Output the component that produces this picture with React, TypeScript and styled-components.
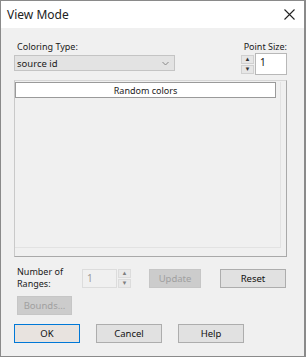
import React from "react";
import styled, { createGlobalStyle } from "styled-components";

const GlobalStyle = createGlobalStyle`
  html, body {
    margin: 0;
    padding: 0;
    background: #ffffff;
  }
  * {
    box-sizing: border-box;
  }
`;

const font = `"Segoe UI", "Noto Sans", "Liberation Sans", sans-serif`;

const Window = styled.div`
  width: 306px;
  height: 357px;
  display: flex;
  flex-direction: column;
  border: 1px solid #8a8a8a;
  border-right-width: 2px;
  background: #f0f0f0;
  font-family: ${font};
  font-size: 9px;
  color: #1a1a1a;
  overflow: hidden;
`;

const TitleBar = styled.div`
  height: 27px;
  flex: none;
  display: flex;
  align-items: center;
  justify-content: space-between;
  background: #ffffff;
  padding: 0 9px 0 6px;
  font-size: 12px;
  color: #222;
`;

const Close = styled.svg`
  width: 11px;
  height: 11px;
`;

const Body = styled.div`
  flex: 1;
  display: flex;
  flex-direction: column;
  padding: 13px 17px 0 13px;
`;

const TopRow = styled.div`
  display: flex;
  justify-content: space-between;
  align-items: flex-start;
`;

const Field = styled.div<{ align?: string }>`
  display: flex;
  flex-direction: column;
  align-items: ${(p) => p.align || "flex-start"};
`;

const Label = styled.div<{ indent?: number }>`
  line-height: 12px;
  padding-left: ${(p) => p.indent ?? 3}px;
  white-space: nowrap;
`;

const Combo = styled.div`
  margin-top: 2px;
  width: 161px;
  height: 16px;
  border: 1px solid #c4c4c4;
  background: #e3e3e3;
  display: flex;
  align-items: center;
  justify-content: space-between;
  padding: 0 5px 0 2px;
  font-size: 9.5px;
`;

const Chevron = styled.svg`
  width: 7px;
  height: 5px;
`;

const SpinGroup = styled.div`
  display: flex;
  align-items: center;
  gap: 1px;
`;

const Arrows = styled.div<{ disabled?: boolean }>`
  display: flex;
  flex-direction: column;
  gap: 1px;
  opacity: ${(p) => (p.disabled ? 0.6 : 1)};
`;

const ArrowBtn = styled.div`
  width: 13px;
  height: 9px;
  background: #e6e6e6;
  border: 1px solid #d0d0d0;
  display: flex;
  align-items: center;
  justify-content: center;
  font-size: 6px;
  line-height: 1;
  color: #333;
`;

const EditBox = styled.div<{ w: number; h: number; disabled?: boolean }>`
  width: ${(p) => p.w}px;
  height: ${(p) => p.h}px;
  background: ${(p) => (p.disabled ? "#f0f0f0" : "#ffffff")};
  border: 1px solid ${(p) => (p.disabled ? "#dcdcdc" : "#b8b8b8")};
  color: ${(p) => (p.disabled ? "#9a9a9a" : "#111")};
  padding: 1px 0 0 4px;
  font-size: 10px;
  line-height: 14px;
`;

const Panel = styled.div`
  margin-top: 5px;
  height: 177px;
  border: 1px solid #a9a9a9;
  border-top-color: #d6d6d6;
  border-left-color: #c9c9c9;
  background: #f0f0f0;
  padding: 1px 5px 0 0;
`;

const Inner = styled.div`
  height: 166px;
  border-right: 1px solid #e2e2e2;
  border-bottom: 1px solid #e2e2e2;
  display: flex;
  flex-direction: column;
`;

const HeaderBar = styled.div`
  height: 16px;
  margin-right: 4px;
  background: #ffffff;
  border: 1px solid #9a9a9a;
  display: flex;
  align-items: center;
  justify-content: center;
  font-size: 9px;
`;

const RangeRow = styled.div`
  margin-top: 9px;
  display: flex;
  align-items: center;
`;

const RangeLabel = styled.div`
  width: 68px;
  padding-left: 3px;
  line-height: 12px;
`;

const Spacer = styled.div<{ w: number }>`
  width: ${(p) => p.w}px;
  flex: none;
`;

const Button = styled.div<{ w: number; disabled?: boolean; primary?: boolean }>`
  width: ${(p) => p.w}px;
  height: 19px;
  display: flex;
  align-items: center;
  justify-content: center;
  background: ${(p) => (p.disabled ? "#cccccc" : p.primary ? "#e8e3df" : "#e1e1e1")};
  border: 1px solid
    ${(p) => (p.disabled ? "#c6c6c6" : p.primary ? "#0078d7" : "#adadad")};
  color: ${(p) => (p.disabled ? "#a0a0a0" : "#111")};
  font-size: 9.5px;
`;

const BoundsRow = styled.div`
  margin-top: 6px;
  padding-left: 3px;
  display: flex;
`;

const FooterRow = styled.div`
  margin-top: 9px;
  display: flex;
  gap: 16px;
`;

export default function App() {
  return (
    <>
      <GlobalStyle />
      <Window>
        <TitleBar>
          <span>View Mode</span>
          <Close viewBox="0 0 11 11">
            <path d="M0.5 0.5 L10.5 10.5 M10.5 0.5 L0.5 10.5" stroke="#222" strokeWidth="1.1" />
          </Close>
        </TitleBar>
        <Body>
          <TopRow>
            <Field>
              <Label>Coloring Type:</Label>
              <Combo>
                <span>source id</span>
                <Chevron viewBox="0 0 7 5">
                  <path d="M0.5 1 L3.5 4 L6.5 1" fill="none" stroke="#888" strokeWidth="1" />
                </Chevron>
              </Combo>
            </Field>
            <Field align="flex-end">
              <Label indent={0}>Point Size:</Label>
              <SpinGroup>
                <Arrows>
                  <ArrowBtn>▲</ArrowBtn>
                  <ArrowBtn>▼</ArrowBtn>
                </Arrows>
                <EditBox w={32} h={22}>1</EditBox>
              </SpinGroup>
            </Field>
          </TopRow>
          <Panel>
            <Inner>
              <HeaderBar>Random colors</HeaderBar>
            </Inner>
          </Panel>
          <RangeRow>
            <RangeLabel>
              Number of
              <br />
              Ranges:
            </RangeLabel>
            <SpinGroup>
              <EditBox w={35} h={19} disabled>
                1
              </EditBox>
              <Arrows disabled>
                <ArrowBtn>▲</ArrowBtn>
                <ArrowBtn>▼</ArrowBtn>
              </Arrows>
            </SpinGroup>
            <Spacer w={18} />
            <Button w={52} disabled>
              Update
            </Button>
            <Spacer w={19} />
            <Button w={66}>Reset</Button>
          </RangeRow>
          <BoundsRow>
            <Button w={55} disabled>
              Bounds...
            </Button>
          </BoundsRow>
          <FooterRow>
            <Button w={66} primary>
              OK
            </Button>
            <Button w={66}>Cancel</Button>
            <Button w={66}>Help</Button>
          </FooterRow>
        </Body>
      </Window>
    </>
  );
}
